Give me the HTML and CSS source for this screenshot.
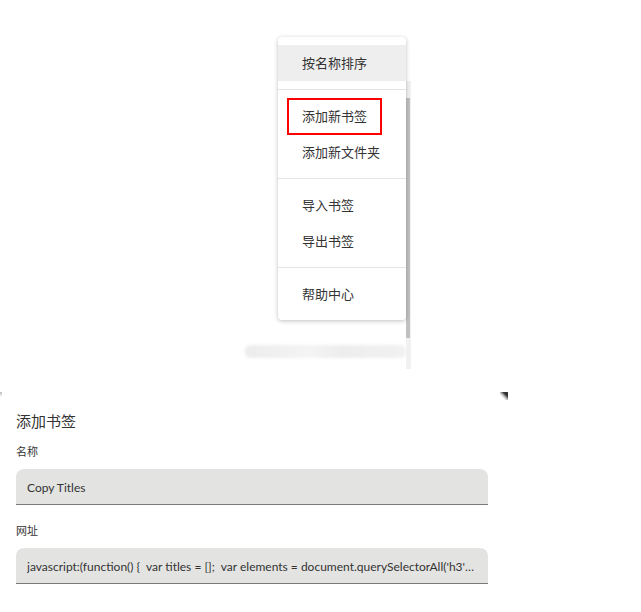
FILE: index.html
```html
<!DOCTYPE html>
<html lang="zh-CN">
<head>
    <meta charset="UTF-8">
    <meta name="viewport" content="width=device-width, initial-scale=1.0">
    <title>书签管理</title>
    <link rel="stylesheet" href="styles.css">
</head>
<body>
    <div class="top">
        <div class="under">
            <div class="list">
                <div class="blur-row"></div>
            </div>
            <div class="track"><div class="thumb"></div></div>
        </div>

        <div class="menu">
            <div class="menu-group">
                <div class="menu-item active">按名称排序</div>
            </div>
            <div class="menu-group">
                <div class="menu-item"><span class="marked">添加新书签</span></div>
                <div class="menu-item">添加新文件夹</div>
            </div>
            <div class="menu-group">
                <div class="menu-item">导入书签</div>
                <div class="menu-item">导出书签</div>
            </div>
            <div class="menu-group">
                <div class="menu-item">帮助中心</div>
            </div>
        </div>
    </div>

    <div class="dialog">
        <div class="dialog-edge">
            <span class="edge-left"></span>
            <span class="edge-right"></span>
        </div>
        <h2 class="dialog-title">添加书签</h2>
        <div class="field">
            <label for="bmName">名称</label>
            <input type="text" id="bmName" value="Copy Titles">
        </div>
        <div class="field">
            <label for="bmUrl">网址</label>
            <input type="text" id="bmUrl" value="javascript:(function() {  var titles = [];  var elements = document.querySelectorAll('h3');  elements.forEach(function(el) { titles.push(el.innerText); }); })();">
        </div>
    </div>
</body>
</html>
```

FILE: styles.css
```css
body {
    margin: 0;
    background: #fff;
    font-family: "Open Sans", "Noto Sans CJK SC", sans-serif;
    color: #333;
}
.top {
    position: relative;
    height: 392px;
}
.under {
    display: flex;
    margin-left: 245px;
    padding-top: 81px;
}
.list {
    width: 161px;
    padding-top: 264px;
}
.blur-row {
    height: 13px;
    border-radius: 6px;
    background: linear-gradient(90deg, #ececec, #f4f4f4 40%, #ededed 60%, #f1f1f1);
    filter: blur(1.5px);
}
.track {
    width: 5px;
    height: 288px;
    background: #f1f1f1;
}
.thumb {
    margin-top: 17px;
    height: 240px;
    width: 4px;
    background: #c1c1c1;
}
.menu {
    position: absolute;
    left: 278px;
    top: 37px;
    width: 128px;
    background: #fff;
    border-radius: 4px;
    box-shadow: 0 1px 4px rgba(0,0,0,0.25);
}
.menu-group {
    padding: 8px 0;
    border-top: 1px solid #e4e4e4;
}
.menu-group:first-child {
    border-top: none;
}
.menu-item {
    height: 36px;
    line-height: 36px;
    padding-left: 24px;
    font-size: 13px;
    color: #333;
}
.menu-item.active {
    background: #eeeeee;
}
.marked {
    display: inline-block;
    margin-left: -15px;
    padding: 0 13px;
    height: 33px;
    line-height: 33px;
    border: 2px solid #ff0000;
}
.dialog {
    width: 508px;
    padding-left: 16px;
    box-sizing: border-box;
}
.dialog-edge {
    display: flex;
    justify-content: space-between;
    height: 0;
    margin-left: -16px;
}
.edge-left {
    width: 2px;
    height: 5px;
    background: linear-gradient(#bbb, #fff);
}
.edge-right {
    width: 8px;
    height: 8px;
    background: linear-gradient(225deg, #333 30%, rgba(80,80,80,0.4) 50%, rgba(255,255,255,0) 70%);
}
.dialog-title {
    margin: 0;
    padding-top: 19px;
    font-size: 15px;
    font-weight: normal;
    line-height: 20px;
    color: #333;
}
.field {
    margin-top: 13px;
}
.field + .field {
    margin-top: 18px;
}
label {
    display: block;
    font-size: 11px;
    line-height: 16px;
    color: #333;
    margin-bottom: 9px;
}
input {
    display: block;
    width: 472px;
    height: 36px;
    box-sizing: border-box;
    padding: 1px 11px 0;
    border: none;
    border-bottom: 1px solid #7a7a7a;
    border-radius: 8px 8px 0 0;
    background: #e3e4e2;
    font-family: Lato, "Noto Sans CJK SC", sans-serif;
    font-size: 12px;
    color: #333;
    text-overflow: ellipsis;
}
```
